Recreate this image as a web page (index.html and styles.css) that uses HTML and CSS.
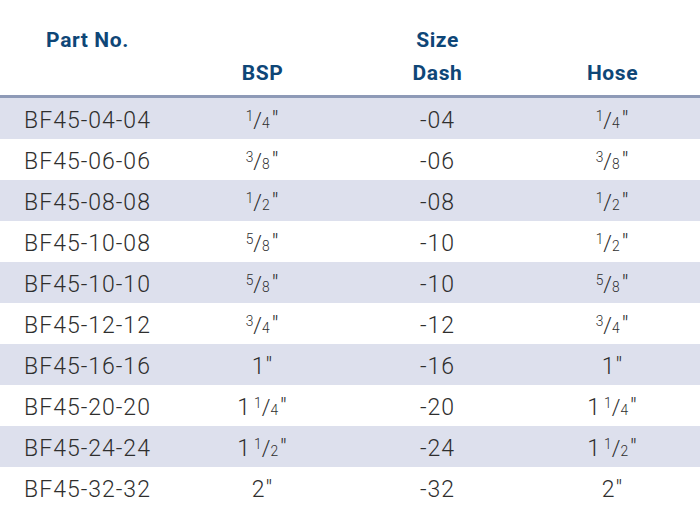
FILE: index.html
```html
<!DOCTYPE html>
<html>
<head>
<meta charset="utf-8">
<link rel="stylesheet" href="styles.css">
</head>
<body>
<table class="spec">
  <thead>
    <tr class="head-top">
      <th>Part No.</th>
      <th></th>
      <th>Size</th>
      <th></th>
    </tr>
    <tr class="head-sub">
      <th></th>
      <th>BSP</th>
      <th>Dash</th>
      <th>Hose</th>
    </tr>
  </thead>
  <tbody>
    <tr><td>BF45-04-04</td><td><span class="frac"><span class="num">1</span><span class="sl">/</span><span class="den">4</span></span>″</td><td>-04</td><td><span class="frac"><span class="num">1</span><span class="sl">/</span><span class="den">4</span></span>″</td></tr>
    <tr><td>BF45-06-06</td><td><span class="frac"><span class="num">3</span><span class="sl">/</span><span class="den">8</span></span>″</td><td>-06</td><td><span class="frac"><span class="num">3</span><span class="sl">/</span><span class="den">8</span></span>″</td></tr>
    <tr><td>BF45-08-08</td><td><span class="frac"><span class="num">1</span><span class="sl">/</span><span class="den">2</span></span>″</td><td>-08</td><td><span class="frac"><span class="num">1</span><span class="sl">/</span><span class="den">2</span></span>″</td></tr>
    <tr><td>BF45-10-08</td><td><span class="frac"><span class="num">5</span><span class="sl">/</span><span class="den">8</span></span>″</td><td>-10</td><td><span class="frac"><span class="num">1</span><span class="sl">/</span><span class="den">2</span></span>″</td></tr>
    <tr><td>BF45-10-10</td><td><span class="frac"><span class="num">5</span><span class="sl">/</span><span class="den">8</span></span>″</td><td>-10</td><td><span class="frac"><span class="num">5</span><span class="sl">/</span><span class="den">8</span></span>″</td></tr>
    <tr><td>BF45-12-12</td><td><span class="frac"><span class="num">3</span><span class="sl">/</span><span class="den">4</span></span>″</td><td>-12</td><td><span class="frac"><span class="num">3</span><span class="sl">/</span><span class="den">4</span></span>″</td></tr>
    <tr><td>BF45-16-16</td><td>1″</td><td>-16</td><td>1″</td></tr>
    <tr><td>BF45-20-20</td><td>1<span class="frac mixed"><span class="num">1</span><span class="sl">/</span><span class="den">4</span></span>″</td><td>-20</td><td>1<span class="frac mixed"><span class="num">1</span><span class="sl">/</span><span class="den">4</span></span>″</td></tr>
    <tr><td>BF45-24-24</td><td>1<span class="frac mixed"><span class="num">1</span><span class="sl">/</span><span class="den">2</span></span>″</td><td>-24</td><td>1<span class="frac mixed"><span class="num">1</span><span class="sl">/</span><span class="den">2</span></span>″</td></tr>
    <tr><td>BF45-32-32</td><td>2″</td><td>-32</td><td>2″</td></tr>
  </tbody>
</table>
</body>
</html>
```
FILE: styles.css
```css
html, body {
  margin: 0;
  padding: 0;
  background: #ffffff;
}
.spec {
  width: 700px;
  border-collapse: collapse;
  table-layout: fixed;
  font-family: Roboto, "Liberation Sans", sans-serif;
}
.spec th, .spec td {
  width: 25%;
  text-align: center;
  padding: 0;
}
.spec th {
  color: #0e4677;
  font-weight: 700;
  font-size: 21px;
  line-height: 24px;
  letter-spacing: 0.6px;
}
.head-top th {
  padding-top: 28px;
  padding-bottom: 6px;
}
.head-sub th {
  padding-top: 3px;
  padding-bottom: 10px;
  border-bottom: 3px solid #8e9ab7;
}
.spec td {
  height: 41px;
  box-sizing: border-box;
  padding-top: 4px;
  line-height: 37px;
  font-size: 23px;
  font-weight: 300;
  letter-spacing: 1px;
  color: #2e2e2e;
}
.spec tbody tr:nth-child(odd) td {
  background: #dde0ed;
}
.frac {
  letter-spacing: 0;
  margin-right: 2px;
}
.frac.mixed {
  margin-left: 3px;
}
.frac .num,
.frac .den {
  font-size: 0.6em;
  line-height: 0;
}
.frac .num {
  vertical-align: 0.5em;
}
.frac .den {
  vertical-align: -0.02em;
}
.frac .sl {
  font-size: 0.95em;
  line-height: 0;
}
```
